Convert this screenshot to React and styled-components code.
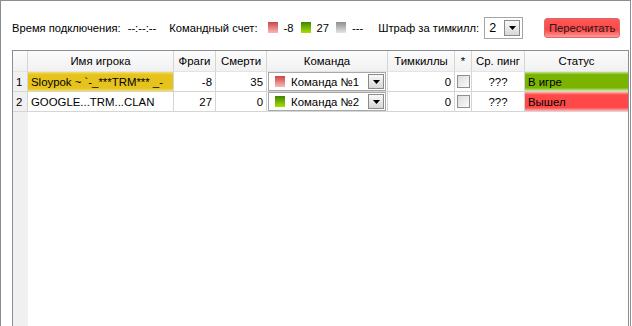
import React from "react";
import styled, { createGlobalStyle } from "styled-components";

const Global = createGlobalStyle`
  html, body { margin: 0; padding: 0; background: #fff; }
  body { font-family: "Liberation Sans", Arial, sans-serif; font-size: 11px; color: #000; }
`;

const Frame = styled.div`
  box-sizing: border-box;
  width: 631px;
  height: 340px;
  border: 1px solid #8c8c94;
  border-bottom: none;
  padding: 14px 0 0 11px;
  display: flex;
  flex-direction: column;
  overflow: hidden;
`;

const Toolbar = styled.div`
  display: flex;
  align-items: center;
  height: 23px;
  padding-top: 1px;
  white-space: nowrap;
  font-size: 11.2px;
`;

const Label = styled.span`
  flex-shrink: 0;
  margin-left: ${(p) => p.$ml || 0}px;
`;

const Swatch = styled.span`
  display: inline-block;
  flex-shrink: 0;
  width: 10px;
  height: 11px;
  margin-left: ${(p) => p.$ml || 0}px;
  margin-right: 6px;
  background: ${(p) => p.$bg};
`;

const red = "linear-gradient(#cc4646, #f7b8b8)";
const green = "linear-gradient(#3f8400, #a6e000)";
const gray = "linear-gradient(#8e8e8e, #e4e4e4)";

const Select = styled.div`
  box-sizing: border-box;
  flex-shrink: 0;
  display: flex;
  align-items: center;
  width: 39px;
  height: 22px;
  margin-left: 5px;
  border: 1px solid #a5a5a5;
  background: #fff;
  padding: 2px;
`;

const SelectText = styled.span`
  flex: 1;
  padding-left: 2px;
  font-size: 12.5px;
`;

const DropBtn = styled.span`
  box-sizing: border-box;
  flex-shrink: 0;
  width: 16px;
  height: 100%;
  border: 1px solid #8a8a8a;
  background: linear-gradient(#f8f8f8, #d8d8d8);
  display: flex;
  align-items: center;
  justify-content: center;
`;

const Arrow = () => (
  <svg width="7" height="4" viewBox="0 0 7 4">
    <path d="M0 0h7L3.5 4z" fill="#000" />
  </svg>
);

const RecalcButton = styled.button`
  box-sizing: border-box;
  flex-shrink: 0;
  margin-left: 21px;
  width: 76px;
  height: 20px;
  border: 1px solid #d96b6b;
  border-radius: 3px;
  background: linear-gradient(#ff5a5a 0%, #ff4545 60%, #ff9a9a 100%);
  font-family: inherit;
  font-size: 11.2px;
  color: #1a1a1a;
  padding: 0;
`;

const Table = styled.div`
  box-sizing: border-box;
  margin-top: 11px;
  width: 617px;
  flex: 1;
  border: 1px solid #8a8d94;
  border-bottom: none;
  display: flex;
  flex-direction: column;
  font-size: 11.4px;
`;

const cols = "15px 146px 42px 51px 121px 67px 17px 53px 1fr";

const Row = styled.div`
  display: grid;
  grid-template-columns: ${cols};
  height: ${(p) => (p.$head ? 21 : 20)}px;
`;

const Cell = styled.div`
  box-sizing: border-box;
  border-right: 1px solid #d5d5d5;
  border-bottom: 1px solid #d5d5d5;
  display: flex;
  align-items: center;
  justify-content: ${(p) => p.$align || "flex-start"};
  padding: ${(p) => p.$pad || "0 3px"};
  white-space: nowrap;
  overflow: hidden;
  background: ${(p) => p.$bg || "#fff"};
  &:last-child { border-right: none; }
`;

const HeadCell = styled(Cell)`
  justify-content: center;
  background: linear-gradient(#fbfbfb, #f1f1f1);
  border-bottom: 1px solid #e4e4e4;
  padding: 0 2px;
`;

const NumCell = styled(Cell)`
  background: #f0f0f0;
  padding: 0 0 0 3px;
`;

const Filler = styled.div`
  flex: 1;
  display: grid;
  grid-template-columns: 15px 1fr;
`;

const FillerNum = styled.div`
  background: #f0f0f0;
`;

const Combo = styled.div`
  box-sizing: border-box;
  display: flex;
  align-items: center;
  width: 118px;
  height: 19px;
  margin-left: 1px;
  border: 1px solid #a8a8a8;
  background: #fff;
  padding: 1px 1px 1px 6px;
`;

const ComboText = styled.span`
  flex: 1;
`;

const Check = styled.span`
  box-sizing: border-box;
  display: block;
  width: 13px;
  height: 13px;
  border: 1px solid #8f8f8f;
  background: linear-gradient(135deg, #dcdcdc, #fbfbfb);
`;

const statusBg = {
  yellow: "linear-gradient(#f3dd66 0%, #e5c21c 15%, #e5c21c 85%, #f3dd66 100%)",
  green: "linear-gradient(#c4e18a 0%, #79b500 14%, #79b500 82%, #cde89a 100%)",
  red: "linear-gradient(#ffb0b0 0%, #ff4848 15%, #ff4848 82%, #ffb8b8 100%)",
};

const players = [
  { n: 1, name: "Sloypok ~ `-_***TRM*** _-", hl: true, frags: -8, deaths: 35, team: "Команда №1", sw: red, tk: 0, ping: "???", status: "В игре", st: "green" },
  { n: 2, name: "GOOGLE...TRM...CLAN", hl: false, frags: 27, deaths: 0, team: "Команда №2", sw: green, tk: 0, ping: "???", status: "Вышел", st: "red" },
];

export default function App() {
  return (
    <>
      <Global />
      <Frame>
        <Toolbar>
          <Label>Время подключения:</Label>
          <Label $ml={7}>--:--:--</Label>
          <Label $ml={13}>Командный счет:</Label>
          <Swatch $ml={10} $bg={red} />
          <Label>-8</Label>
          <Swatch $ml={7} $bg={green} />
          <Label>27</Label>
          <Swatch $ml={7} $bg={gray} />
          <Label>---</Label>
          <Label $ml={15}>Штраф за тимкилл:</Label>
          <Select>
            <SelectText>2</SelectText>
            <DropBtn><Arrow /></DropBtn>
          </Select>
          <RecalcButton>Пересчитать</RecalcButton>
        </Toolbar>
        <Table>
          <Row $head>
            <HeadCell />
            <HeadCell>Имя игрока</HeadCell>
            <HeadCell>Фраги</HeadCell>
            <HeadCell>Смерти</HeadCell>
            <HeadCell>Команда</HeadCell>
            <HeadCell>Тимкиллы</HeadCell>
            <HeadCell>*</HeadCell>
            <HeadCell>Ср. пинг</HeadCell>
            <HeadCell>Статус</HeadCell>
          </Row>
          {players.map((p) => (
            <Row key={p.n}>
              <NumCell>{p.n}</NumCell>
              <Cell $bg={p.hl ? statusBg.yellow : "#fff"}>{p.name}</Cell>
              <Cell $align="flex-end">{p.frags}</Cell>
              <Cell $align="flex-end">{p.deaths}</Cell>
              <Cell $pad="0">
                <Combo>
                  <Swatch $bg={p.sw} />
                  <ComboText>{p.team}</ComboText>
                  <DropBtn><Arrow /></DropBtn>
                </Combo>
              </Cell>
              <Cell $align="flex-end">{p.tk}</Cell>
              <Cell $align="center" $pad="0">
                <Check />
              </Cell>
              <Cell $align="center">{p.ping}</Cell>
              <Cell $bg={statusBg[p.st]}>{p.status}</Cell>
            </Row>
          ))}
          <Filler>
            <FillerNum />
            <div />
          </Filler>
        </Table>
      </Frame>
    </>
  );
}
